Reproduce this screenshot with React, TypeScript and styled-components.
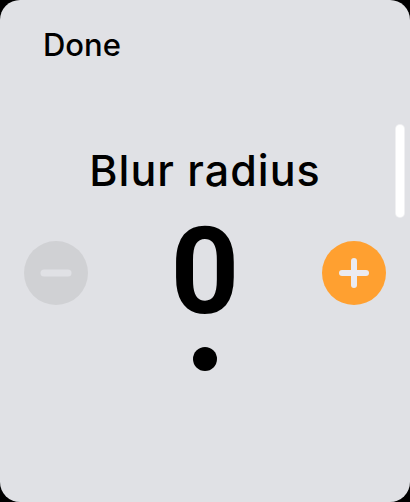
import React, { FC, useState } from "react";
import styled, { createGlobalStyle } from "styled-components";

const GlobalStyle = createGlobalStyle`
  html, body {
    margin: 0;
    padding: 0;
    background: #000;
  }
  body {
    font-family: Inter, "Liberation Sans", sans-serif;
  }
`;

const Screen = styled.div`
  position: relative;
  width: 410px;
  height: 502px;
  box-sizing: border-box;
  background: #e0e1e5;
  border-radius: 20px;
  overflow: hidden;
  display: flex;
  flex-direction: column;
  align-items: center;
`;

const TopBar = styled.div`
  align-self: stretch;
  display: flex;
  align-items: center;
  padding: 29px 0 0 43px;
`;

const DoneButton = styled.button`
  border: none;
  background: none;
  padding: 0;
  font-family: inherit;
  font-size: 31px;
  line-height: 31px;
  font-weight: 500;
  color: #000;
  cursor: pointer;
`;

const Title = styled.h1`
  margin: 89px 0 0;
  font-size: 43px;
  font-weight: 500;
  line-height: 43px;
  letter-spacing: 1px;
  color: #000;
`;

const StepperRow = styled.div`
  align-self: stretch;
  display: flex;
  align-items: center;
  justify-content: space-between;
  padding: 0 24px;
  margin-top: 22px;
  height: 117px;
`;

const RoundButton = styled.button<{ $active: boolean }>`
  width: 64px;
  height: 64px;
  border-radius: 50%;
  border: none;
  padding: 0;
  display: flex;
  align-items: center;
  justify-content: center;
  background: ${(p) => (p.$active ? "#ffa030" : "#d0d1d4")};
  cursor: ${(p) => (p.$active ? "pointer" : "default")};
`;

const Value = styled.div`
  font-family: Roboto, "Liberation Sans", sans-serif;
  font-size: 120px;
  font-weight: 700;
  line-height: 117px;
  color: #000;
`;

const Dot = styled.div`
  width: 24px;
  height: 24px;
  border-radius: 50%;
  background: #000;
  margin-top: 16px;
`;

const ScrollThumb = styled.div`
  position: absolute;
  right: 6px;
  top: 125px;
  width: 8px;
  height: 92px;
  border-radius: 4px;
  background: #fff;
  box-shadow: 0 0 0 1px rgba(255, 255, 255, 0.5);
`;

const MinusIcon: FC = () => (
  <svg width="32" height="8" viewBox="0 0 32 8">
    <line x1="4" y1="4" x2="28" y2="4" stroke="#e0e1e5" strokeWidth="7" strokeLinecap="round" />
  </svg>
);

const PlusIcon: FC = () => (
  <svg width="32" height="32" viewBox="0 0 32 32">
    <g stroke="#ebebf0" strokeWidth="6" strokeLinecap="round">
      <line x1="4" y1="16" x2="28" y2="16" />
      <line x1="16" y1="4" x2="16" y2="28" />
    </g>
  </svg>
);

const App: FC = () => {
  const [radius, setRadius] = useState(0);

  return (
    <>
      <GlobalStyle />
      <Screen>
        <TopBar>
          <DoneButton>Done</DoneButton>
        </TopBar>
        <Title>Blur radius</Title>
        <StepperRow>
          <RoundButton
            $active={radius > 0}
            onClick={() => setRadius(Math.max(0, radius - 1))}
          >
            <MinusIcon />
          </RoundButton>
          <Value>{radius}</Value>
          <RoundButton $active onClick={() => setRadius(radius + 1)}>
            <PlusIcon />
          </RoundButton>
        </StepperRow>
        <Dot />
        <ScrollThumb />
      </Screen>
    </>
  );
};

export default App;
